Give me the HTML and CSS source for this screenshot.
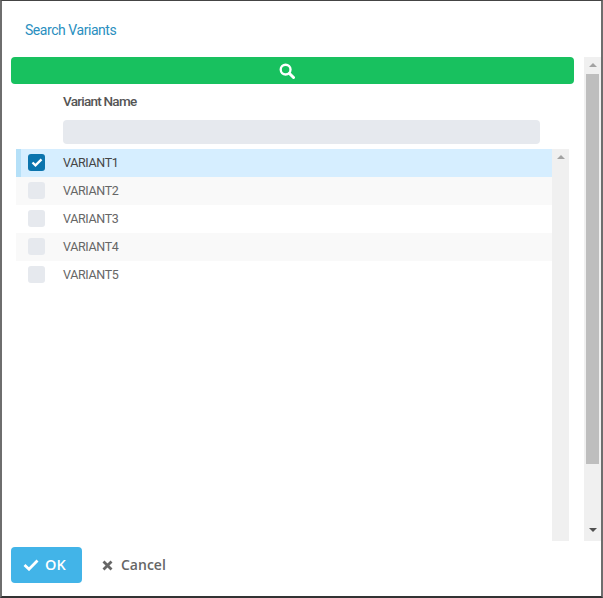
FILE: index.html
```html
<!DOCTYPE html>
<html>
<head>
	<title>Search Variants</title>
	<link rel="stylesheet" href="styles.css">
</head>
<body>
<div class="dialog">
	<div class="title">Search Variants</div>
	<div class="main">
		<div class="content">
			<button class="search" type="button">
				<svg width="16" height="16" viewBox="0 0 15 15"><circle cx="6.2" cy="6.2" r="4.6" fill="none" stroke="#fff" stroke-width="2.2"/><path d="M9.8 9.8L13.6 13.6" stroke="#fff" stroke-width="2.8" stroke-linecap="round"/></svg>
			</button>
			<div class="colhead">Variant Name</div>
			<div class="filter"></div>
			<div class="grid">
				<div class="rows">
					<div class="row selected">
						<span class="check checked"><svg width="12" height="9" viewBox="0 0 13 10"><path d="M1.5 5L4.8 8.2L11.5 1.6" fill="none" stroke="#fff" stroke-width="2.6"/></svg></span>
						<span class="name">VARIANT1</span>
					</div>
					<div class="row odd"><span class="check"></span><span class="name">VARIANT2</span></div>
					<div class="row"><span class="check"></span><span class="name">VARIANT3</span></div>
					<div class="row odd"><span class="check"></span><span class="name">VARIANT4</span></div>
					<div class="row"><span class="check"></span><span class="name">VARIANT5</span></div>
				</div>
				<div class="innerbar"><span class="arrow-up"></span></div>
			</div>
		</div>
		<div class="outerbar">
			<span class="arrow-up"></span>
			<div class="thumb"></div>
			<span class="arrow-down"></span>
		</div>
	</div>
	<div class="footer">
		<button class="ok" type="button">
			<svg width="16" height="12" viewBox="0 0 16 12"><path d="M1.5 6L6 10.2L14.5 1.5" fill="none" stroke="#fff" stroke-width="2.8"/></svg>
			<span class="label">OK</span>
		</button>
		<button class="cancel" type="button">
			<svg width="11" height="11" viewBox="0 0 11 11"><path d="M1.5 1.5L9.5 9.5M9.5 1.5L1.5 9.5" fill="none" stroke="#666" stroke-width="2.8"/></svg>
			<span class="label">Cancel</span>
		</button>
	</div>
</div>
</body>
</html>
```

FILE: styles.css
```css
html, body {
	margin: 0;
	padding: 0;
	background: #fff;
}
.dialog {
	box-sizing: border-box;
	width: 603px;
	height: 598px;
	border-top: 1px solid #444;
	border-left: 2px solid #6e6e6e;
	border-right: 2px solid #6e6e6e;
	border-bottom: 2px solid #333;
	background: #fff;
	display: flex;
	flex-direction: column;
	font-family: Roboto, sans-serif;
}
.title {
	height: 56px;
	box-sizing: border-box;
	padding: 20px 0 0 23px;
	font-size: 14px;
	line-height: 18px;
	color: #2a8fc0;
	letter-spacing: -0.45px;
}
.main {
	display: flex;
	height: 484px;
	padding-left: 9px;
}
.content {
	width: 563px;
	display: flex;
	flex-direction: column;
}
.search {
	height: 27px;
	border: 0;
	padding: 0 12px 0 0;
	border-radius: 4px;
	background: #18c15f;
	display: flex;
	align-items: center;
	justify-content: center;
}
.colhead {
	padding: 9px 0 0 52px;
	height: 27px;
	box-sizing: border-box;
	font-size: 13.5px;
	line-height: 17px;
	font-weight: 500;
	color: #555;
	letter-spacing: -0.75px;
	margin-bottom: 9px;
}
.filter {
	margin-left: 52px;
	width: 477px;
	height: 24px;
	border-radius: 4px;
	background: #e6e9ee;
}
.grid {
	display: flex;
	margin: 5px 5px 0 5px;
	flex: 1;
}
.rows {
	width: 536px;
}
.row {
	height: 28px;
	display: flex;
	align-items: flex-start;
	box-sizing: border-box;
	padding: 5px 0 0 12px;
}
.row.odd {
	background: #f9f9f9;
}
.row.selected {
	background: #d6eeff;
	border-left: 5px solid #b5e0f8;
	padding-left: 7px;
}
.check {
	width: 17px;
	height: 17px;
	border-radius: 3px;
	background: #e6e9ee;
	display: flex;
	align-items: center;
	justify-content: center;
}
.check.checked {
	background: #0b74ad;
}
.name {
	margin-left: 18px;
	font-size: 12.5px;
	line-height: 16px;
	padding-top: 1px;
	color: #666;
	letter-spacing: -0.35px;
}
.selected .name {
	color: #444;
}
.innerbar {
	width: 17px;
	background: #f0f0f0;
	display: flex;
	flex-direction: column;
	align-items: center;
	padding-top: 6px;
	box-sizing: border-box;
}
.outerbar {
	width: 17px;
	margin-left: 10px;
	background: #f0f0f0;
	display: flex;
	flex-direction: column;
	align-items: center;
	box-sizing: border-box;
	padding-top: 6px;
}
.thumb {
	width: 13px;
	height: 390px;
	margin-top: 7px;
	background: #bebebe;
}
.arrow-up {
	width: 0;
	height: 0;
	border-left: 4px solid transparent;
	border-right: 4px solid transparent;
	border-bottom: 4px solid #a3a3a3;
}
.arrow-down {
	width: 0;
	height: 0;
	margin-top: 64px;
	border-left: 4px solid transparent;
	border-right: 4px solid transparent;
	border-top: 4px solid #505050;
}
.footer {
	display: flex;
	align-items: center;
	padding: 6px 0 0 9px;
}
.footer button {
	font-family: "Open Sans", sans-serif;
	font-size: 14px;
	font-weight: 600;
	border: 0;
	display: flex;
	align-items: center;
	height: 36px;
	padding: 0;
}
.label {
	margin-top: -2px;
}
.ok {
	width: 71px;
	border-radius: 4px;
	background: #42b4e8;
	color: #fff;
	padding-left: 12px !important;
	gap: 6px;
}
.ok .label {
	font-size: 14.5px;
}
.cancel {
	background: none;
	color: #666;
	margin-left: 20px;
	gap: 8px;
}
```
